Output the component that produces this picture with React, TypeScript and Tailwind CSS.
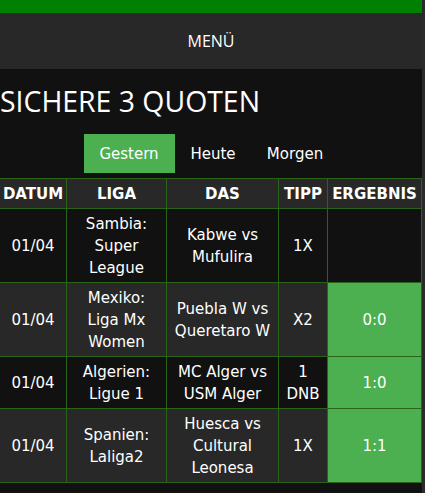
const rows = [
  { date: "01/04", liga: ["Sambia:", "Super", "League"], match: ["Kabwe vs", "Mufulira"], tipp: ["1X"], result: "" },
  { date: "01/04", liga: ["Mexiko:", "Liga Mx", "Women"], match: ["Puebla W vs", "Queretaro W"], tipp: ["X2"], result: "0:0" },
  { date: "01/04", liga: ["Algerien:", "Ligue 1"], match: ["MC Alger vs", "USM Alger"], tipp: ["1", "DNB"], result: "1:0" },
  { date: "01/04", liga: ["Spanien:", "Laliga2"], match: ["Huesca vs", "Cultural", "Leonesa"], tipp: ["1X"], result: "1:1" },
];

const cell = "flex flex-col items-center justify-center text-center border-r border-[#2a6419] py-[3.5px]";

function Lines({ items }: { items: string[] }) {
  return (
    <>
      {items.map((t) => (
        <span key={t}>{t}</span>
      ))}
    </>
  );
}

export default function App() {
  return (
    <div className="flex w-[425px] min-h-[493px] bg-[#2b2b2b]">
      <div className="w-[422px] bg-[#111111] text-white">
        <div className="h-[13px] bg-[#008000]" />
        <div className="h-[56px] bg-[#282828] flex items-center justify-center font-['Open_Sans',sans-serif] text-[16px]">
          MENÜ
        </div>

        <h1 className="mt-[13px] font-['Open_Sans',sans-serif] text-[28.4px] leading-[38px]">
          SICHERE 3 QUOTEN
        </h1>

        <div className="mt-[14px] flex justify-center font-['DejaVu_Sans',sans-serif] text-[15px]">
          <button className="w-[91px] h-[39px] pt-[2px] bg-[#4caf50]">Gestern</button>
          <button className="w-[77px] h-[39px] pt-[2px]">Heute</button>
          <button className="w-[87px] h-[39px] pt-[2px]">Morgen</button>
        </div>

        <div className="mt-[5px] border-t border-[#2a6419] font-['DejaVu_Sans',sans-serif] text-[15px] leading-[22px]">
          <div className="grid grid-cols-[67px_100px_112px_49px_94px] bg-[#282828] border-b border-[#2a6419] font-bold">
            <div className={cell}>DATUM</div>
            <div className={cell}>LIGA</div>
            <div className={cell}>DAS</div>
            <div className={cell}>TIPP</div>
            <div className={cell}>ERGEBNIS</div>
          </div>
          {rows.map((r, i) => (
            <div
              key={i}
              className={`grid grid-cols-[67px_100px_112px_49px_94px] border-b border-[#2a6419] ${
                i % 2 === 0 ? "bg-[#111111]" : "bg-[#282828]"
              }`}
            >
              <div className={cell}>{r.date}</div>
              <div className={cell}>
                <Lines items={r.liga} />
              </div>
              <div className={cell}>
                <Lines items={r.match} />
              </div>
              <div className={cell}>
                <Lines items={r.tipp} />
              </div>
              <div className={`${cell} ${r.result ? "bg-[#4caf50]" : ""}`}>{r.result}</div>
            </div>
          ))}
        </div>
      </div>
    </div>
  );
}
